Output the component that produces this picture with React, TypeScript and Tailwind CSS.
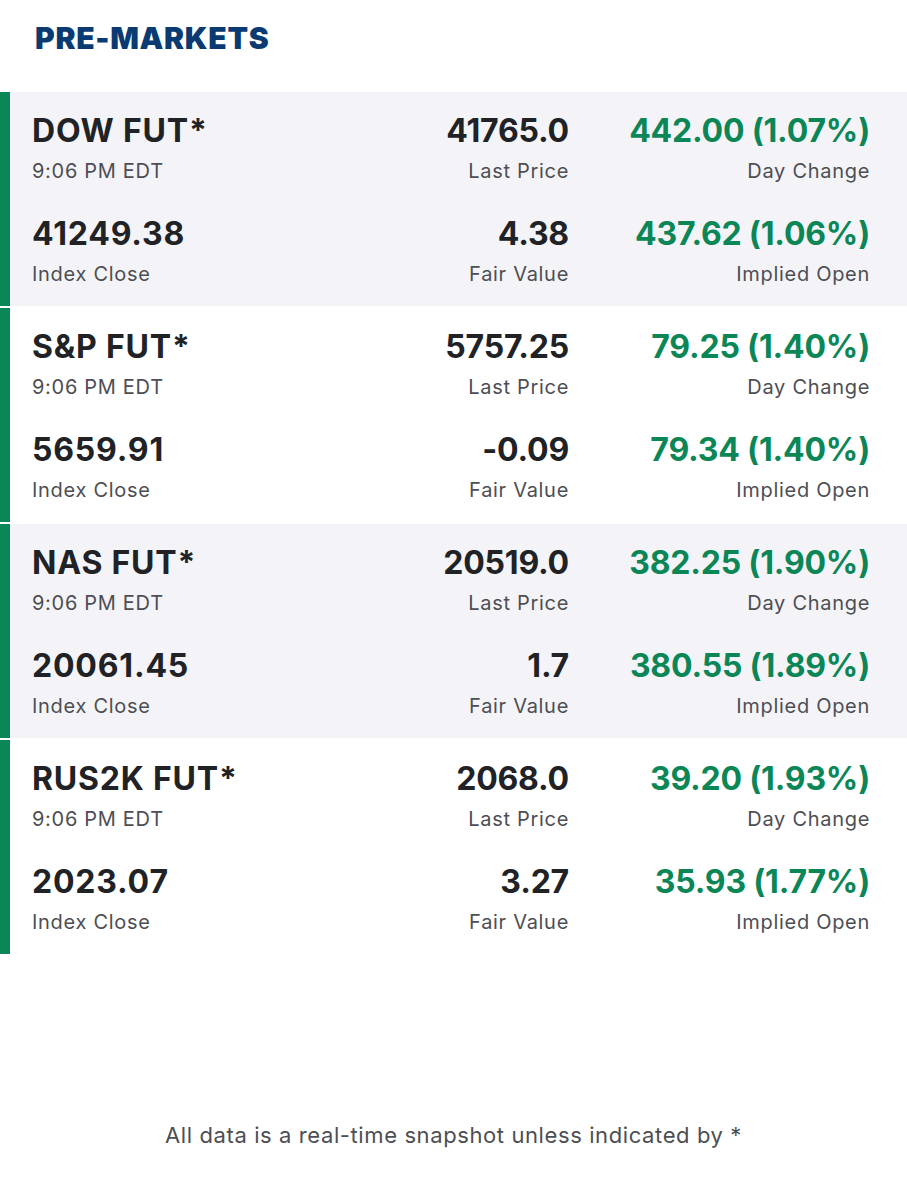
const rows = [
  {
    name: "DOW FUT*",
    time: "9:06 PM EDT",
    last: "41765.0",
    change: "442.00 (1.07%)",
    close: "41249.38",
    fair: "4.38",
    implied: "437.62 (1.06%)",
  },
  {
    name: "S&P FUT*",
    time: "9:06 PM EDT",
    last: "5757.25",
    change: "79.25 (1.40%)",
    close: "5659.91",
    fair: "-0.09",
    implied: "79.34 (1.40%)",
  },
  {
    name: "NAS FUT*",
    time: "9:06 PM EDT",
    last: "20519.0",
    change: "382.25 (1.90%)",
    close: "20061.45",
    fair: "1.7",
    implied: "380.55 (1.89%)",
  },
  {
    name: "RUS2K FUT*",
    time: "9:06 PM EDT",
    last: "2068.0",
    change: "39.20 (1.93%)",
    close: "2023.07",
    fair: "3.27",
    implied: "35.93 (1.77%)",
  },
];

function Cell({
  value,
  label,
  align = "left",
  green = false,
}: {
  value: string;
  label: string;
  align?: "left" | "right";
  green?: boolean;
}) {
  return (
    <div className={align === "right" ? "text-right" : "text-left"}>
      <div
        className={`text-[32px] leading-[40px] font-bold ${
          align === "left" ? "tracking-[0.8px]" : "tracking-[-0.2px]"
        } ${green ? "text-[#0b8656]" : "text-[#202226]"}`}
      >
        {value}
      </div>
      <div className="mt-[6px] text-[20px] leading-[28px] tracking-[0.7px] text-[#4d4e53]">
        {label}
      </div>
    </div>
  );
}

export default function App() {
  return (
    <div
      className="w-[907px] min-h-[1200px] bg-white"
      style={{ fontFamily: "Inter, 'Noto Sans', sans-serif" }}
    >
      {/* Header */}
      <div className="pt-[20px] pl-[35px]">
        <h1 className="text-[30px] leading-[36px] font-black text-[#0a3a72] tracking-[0.7px]">
          PRE-MARKETS
        </h1>
      </div>

      {/* Futures list */}
      <div className="mt-[36px] flex flex-col gap-[2px]">
        {rows.map((r, i) => (
          <div
            key={r.name}
            className={`border-l-[10px] border-[#0b8656] pl-[22px] pr-[37px] pt-[19px] pb-[18px] ${
              i % 2 === 0 ? "bg-[#f4f4f8]" : "bg-white"
            }`}
          >
            <div className="grid grid-cols-[1fr_220px_301px]">
              <Cell value={r.name} label={r.time} />
              <Cell value={r.last} label="Last Price" align="right" />
              <Cell value={r.change} label="Day Change" align="right" green />
            </div>
            <div className="mt-[29px] grid grid-cols-[1fr_220px_301px]">
              <Cell value={r.close} label="Index Close" />
              <Cell value={r.fair} label="Fair Value" align="right" />
              <Cell value={r.implied} label="Implied Open" align="right" green />
            </div>
          </div>
        ))}
      </div>

      {/* Footer */}
      <p className="mt-[166px] text-center text-[22px] leading-[30px] tracking-[0.6px] text-[#4d4e53]">
        All data is a real-time snapshot unless indicated by *
      </p>
    </div>
  );
}
